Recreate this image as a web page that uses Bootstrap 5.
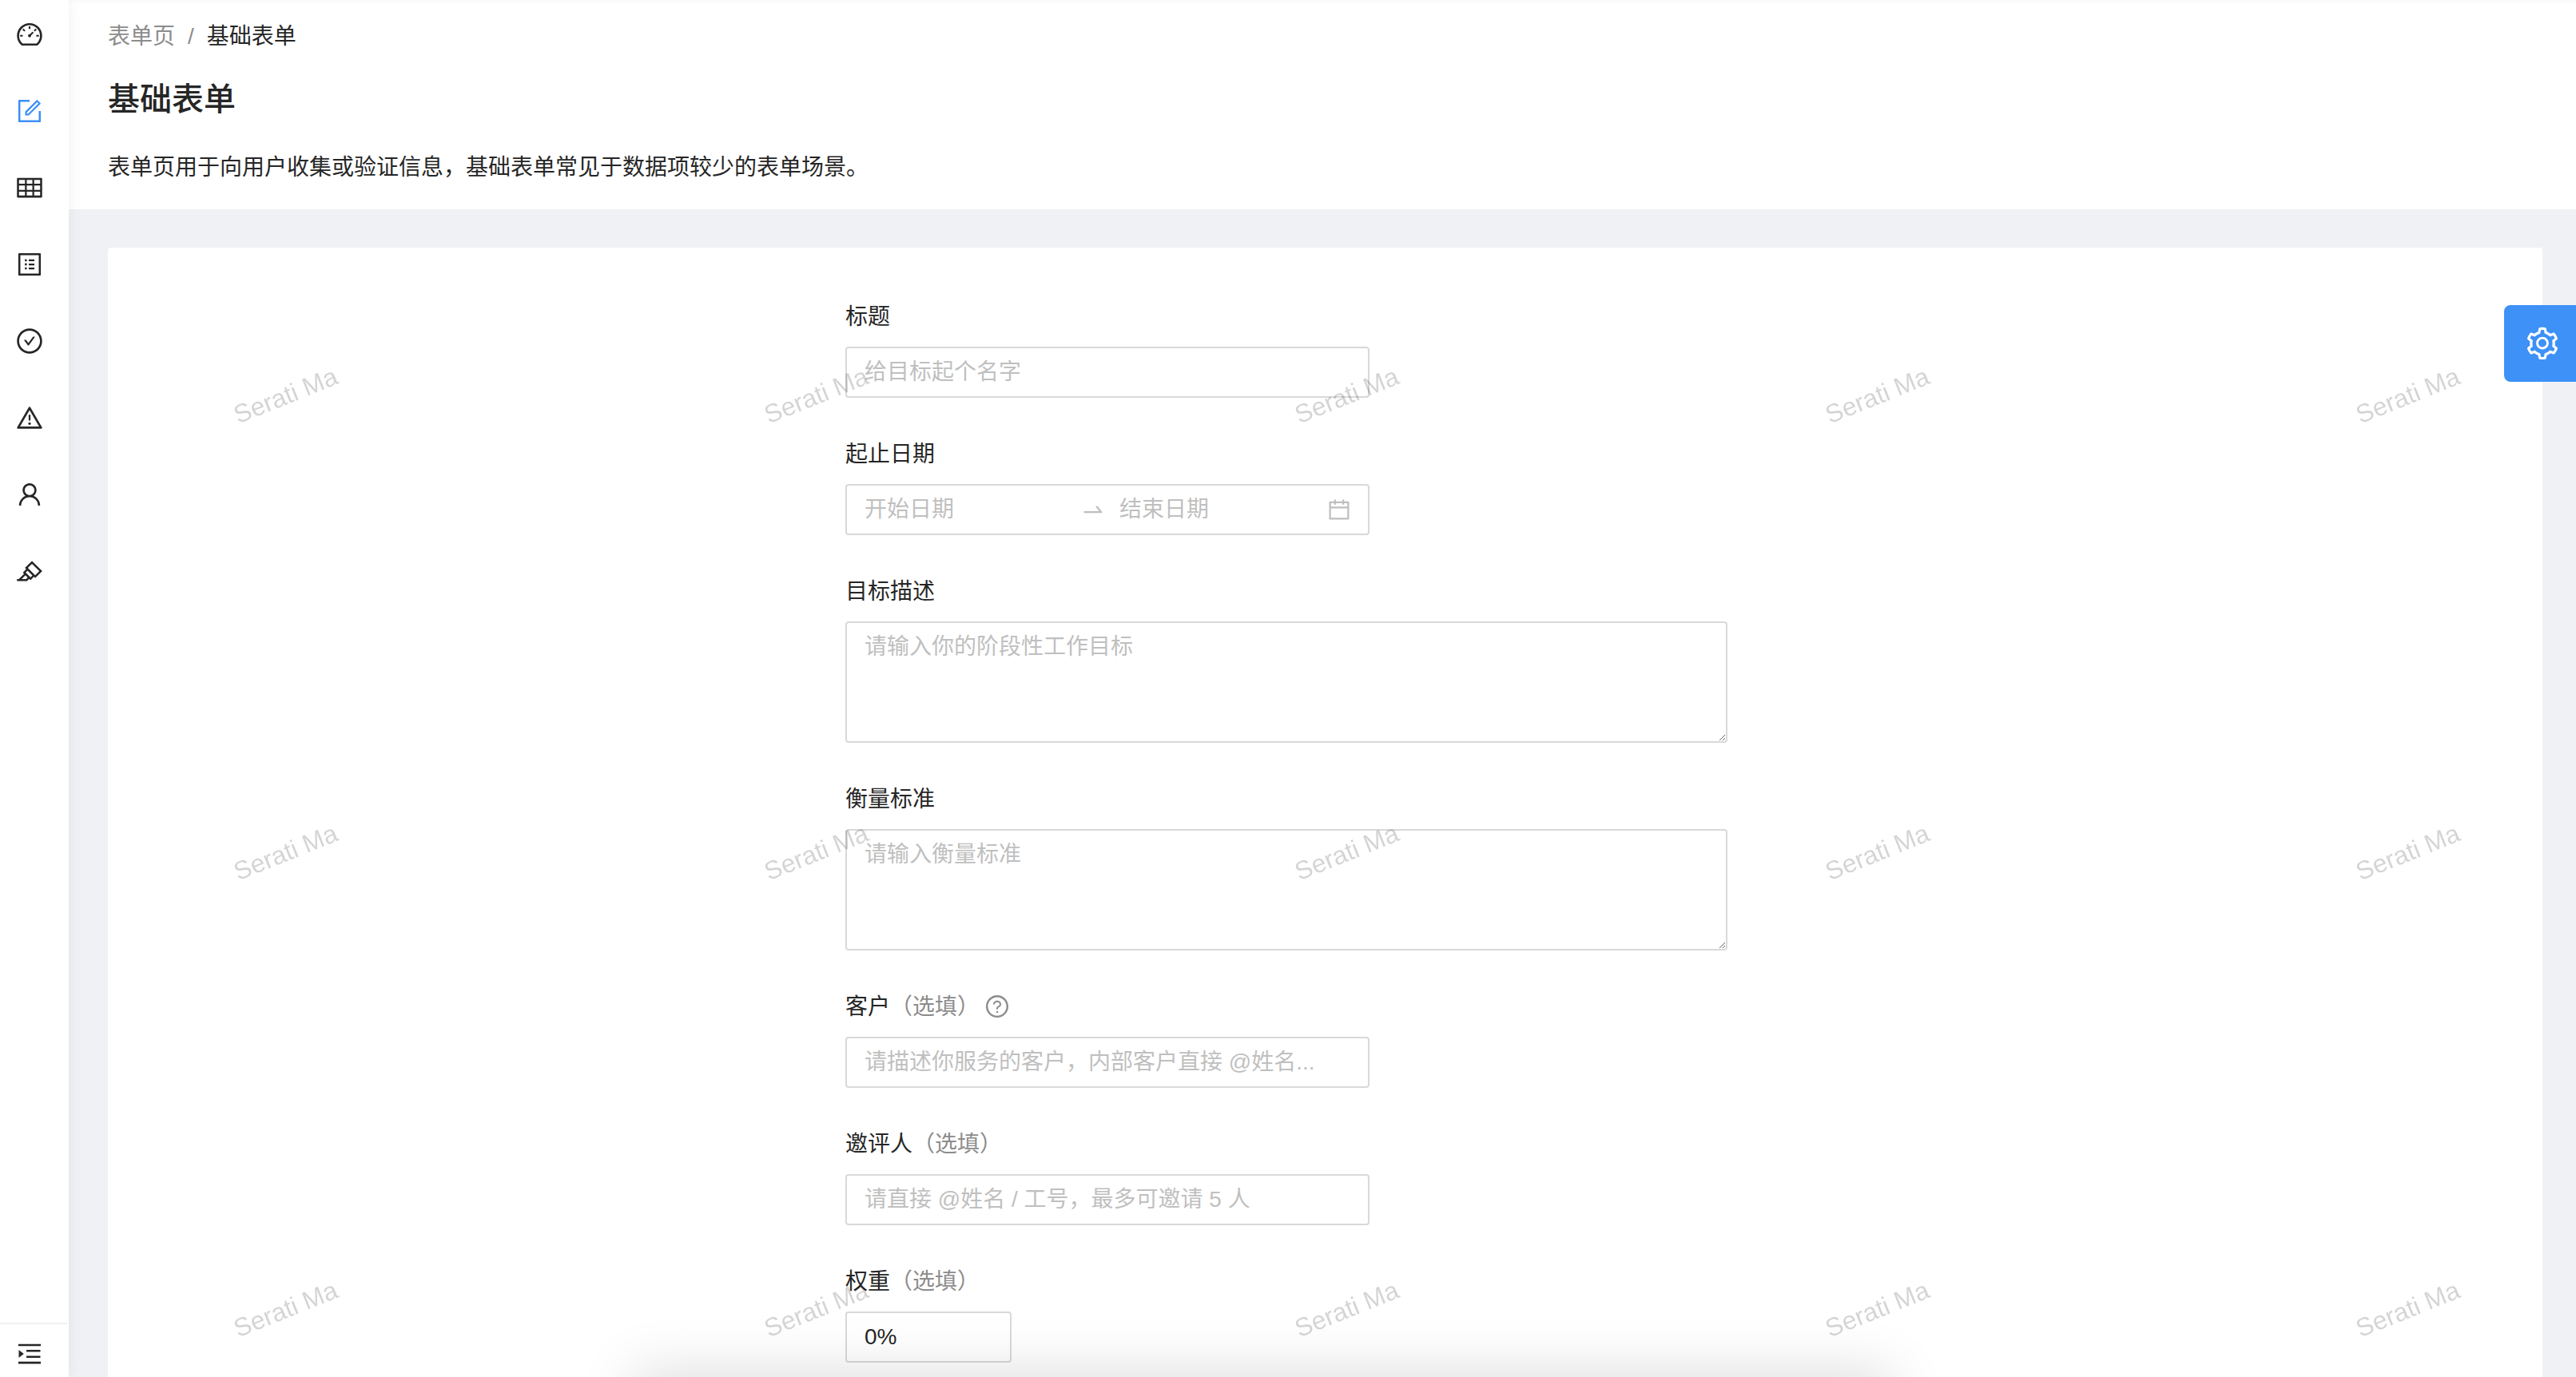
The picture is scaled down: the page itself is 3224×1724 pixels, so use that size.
<!DOCTYPE html>
<html lang="zh-CN">
<head>
<meta charset="utf-8">
<title>基础表单</title>
<link href="https://cdn.jsdelivr.net/npm/bootstrap@5.3.0/dist/css/bootstrap.min.css" rel="stylesheet">
<style>
html,body{height:100%;overflow:hidden}
body{font-family:"Liberation Sans","Noto Sans CJK SC",sans-serif;font-size:28px;line-height:44px;color:#262626;background:#f0f1f5}
.app-shell{height:100vh}
.app-side{width:86px;flex:none;background:#fff;box-shadow:2px 0 16px rgba(0,0,0,.05);z-index:2}
.side-list{padding:15px 12px 0 0;gap:40px}
.side-ico{width:56px;height:56px;color:#262626}
.side-ico svg{width:36px;height:36px;fill:currentColor}
.side-ico.is-active{color:#3d90f5}
.side-foot{margin-right:2px;padding:8px 10px 0 0;border-top:2px solid #f0f0f0;height:68px}
.page-head{padding:24px 48px 0 49px;height:262px;box-shadow:inset 0 5px 4px -3px rgba(0,0,0,.03)}
.page-head .breadcrumb{--bs-breadcrumb-item-padding-x:16px;--bs-breadcrumb-divider-color:#8c8c8c;--bs-breadcrumb-item-active-color:#262626;--bs-breadcrumb-margin-bottom:0;font-size:28px;line-height:44px}
.crumb-link{color:#8c8c8c}
.page-title{font-size:40px;line-height:56px;font-weight:500;margin:28px 0 36px}
.page-desc{margin:0}
.page-body{padding:48px 42px 0 49px}
.form-sheet{border:0;border-radius:4px;padding:64px 0 0 923px}
.f-item{margin-bottom:48px}
.f-item .form-label{display:block;margin-bottom:15px;padding-top:1px;line-height:44px;font-size:28px;color:#262626}
.f-opt{color:#8c8c8c}
.f-q{width:32px;height:32px;fill:#8c8c8c;margin-left:6px;vertical-align:-6px}
.f-item .form-control{border:2px solid #d9d9d9;border-radius:4px;font-size:28px;line-height:44px;padding:8px 22px;color:#262626;background-color:transparent;height:64px;box-shadow:none}
.f-item .form-control::placeholder{color:#bfbfbf;opacity:1}
.f-item textarea.form-control{height:152px;width:1104px;min-height:0}
.w-m{width:656px}
.w-s{width:208px}
.date-box{gap:0;padding:8px 22px!important}
.date-in{border:0;outline:0;padding:0;font-size:28px;line-height:44px;width:252px;flex:none;background:transparent}
.date-in::placeholder{color:#bfbfbf;opacity:1}
.date-arrow{width:32px;height:32px;fill:#bfbfbf;margin:0 17px 0 18px;flex:none}
.date-cal{width:32px;height:32px;fill:#bfbfbf;margin-left:auto;margin-right:-2px;flex:none}
.gear-tab{position:fixed;right:0;top:382px;width:90px;height:96px;background:#3d91f7;border-radius:8px 0 0 8px;z-index:5}
.gear-tab svg{width:46px;height:46px;fill:#fff;margin-left:6px}
.wm-layer{position:fixed;left:25px;top:209px;display:grid;grid-template-columns:repeat(5,664px);grid-auto-rows:572px;pointer-events:none;z-index:3}
.wm-cell{display:flex;align-items:center;justify-content:center;font-family:"Liberation Sans",sans-serif;font-size:32px;line-height:40px;color:rgba(0,0,0,.17)}
.wm-cell span{transform:rotate(-22deg);white-space:nowrap;display:block}
.foot-glow{position:fixed;left:800px;width:1560px;top:1724px;height:80px;box-shadow:0 0 70px 8px rgba(0,0,0,.13);z-index:4}
</style>
</head>
<body>
<div class="app-shell d-flex">
  <aside class="app-side d-flex flex-column justify-content-between">
    <div class="side-list d-flex flex-column align-items-center">
      <div class="side-ico d-flex align-items-center justify-content-center"><svg viewBox="0 0 1024 1024"><path d="M924.8 385.6a446.7 446.7 0 0 0-96-142.4 446.7 446.7 0 0 0-142.4-96C631.1 123.8 572.5 112 512 112s-119.1 11.8-174.4 35.2a446.7 446.7 0 0 0-142.4 96 446.7 446.7 0 0 0-96 142.4C75.8 440.9 64 499.5 64 560c0 132.7 58.3 257.7 159.9 343.1l1.7 1.4c5.8 4.8 13.1 7.5 20.6 7.5h531.7c7.5 0 14.8-2.7 20.6-7.5l1.7-1.4C901.7 817.7 960 692.7 960 560c0-60.5-11.9-119.1-35.2-174.4zM761.4 836H262.6A371.12 371.12 0 0 1 140 560c0-99.4 38.7-192.8 109-263 70.3-70.3 163.7-109 263-109 99.4 0 192.8 38.7 263 109 70.3 70.3 109 163.7 109 263 0 105.6-44.5 205.5-122.6 276zM623.5 421.5a8.03 8.03 0 0 0-11.3 0L527.7 506c-18.7-5-39.4-.2-54.1 14.5a55.95 55.95 0 0 0 0 79.2 55.95 55.95 0 0 0 79.2 0 55.87 55.87 0 0 0 14.5-54.1l84.5-84.5c3.1-3.1 3.1-8.2 0-11.3l-28.3-28.3zM490 320h44c4.4 0 8-3.6 8-8v-80c0-4.4-3.6-8-8-8h-44c-4.4 0-8 3.6-8 8v80c0 4.4 3.6 8 8 8zm260 218v44c0 4.4 3.6 8 8 8h80c4.4 0 8-3.6 8-8v-44c0-4.4-3.6-8-8-8h-80c-4.4 0-8 3.6-8 8zm12.7-197.2l-31.1-31.1a8.03 8.03 0 0 0-11.3 0l-56.6 56.6a8.03 8.03 0 0 0 0 11.3l31.1 31.1c3.1 3.1 8.2 3.1 11.3 0l56.6-56.6c3.1-3.1 3.1-8.2 0-11.3zm-458.6-31.1a8.03 8.03 0 0 0-11.3 0l-31.1 31.1a8.03 8.03 0 0 0 0 11.3l56.6 56.6c3.1 3.1 8.2 3.1 11.3 0l31.1-31.1c3.1-3.1 3.1-8.2 0-11.3l-56.6-56.6zM262 530h-80c-4.4 0-8 3.6-8 8v44c0 4.4 3.6 8 8 8h80c4.4 0 8-3.6 8-8v-44c0-4.4-3.6-8-8-8z"/></svg></div>
      <div class="side-ico is-active d-flex align-items-center justify-content-center"><svg viewBox="0 0 1024 1024"><path d="M904 512h-56c-4.4 0-8 3.6-8 8v320H184V184h320c4.4 0 8-3.6 8-8v-56c0-4.4-3.6-8-8-8H144c-17.7 0-32 14.3-32 32v736c0 17.7 14.3 32 32 32h736c17.7 0 32-14.3 32-32V520c0-4.4-3.6-8-8-8z"/><path d="M355.9 534.9L354 653.8c-.1 8.9 7.1 16.2 16 16.2h.4l118-2.9c2-.1 4-.9 5.4-2.3l415.9-415c3.1-3.1 3.1-8.2 0-11.3L785.4 114.3c-1.6-1.6-3.6-2.3-5.7-2.3s-4.1.8-5.7 2.3l-415.8 415a8.3 8.3 0 0 0-2.3 5.6zm63.5 23.6L779.7 199l45.2 45.1-360.5 359.7-45.7 1.1.7-46.4z"/></svg></div>
      <div class="side-ico d-flex align-items-center justify-content-center"><svg viewBox="0 0 1024 1024"><path d="M928 160H96c-17.7 0-32 14.3-32 32v640c0 17.7 14.3 32 32 32h832c17.7 0 32-14.3 32-32V192c0-17.7-14.3-32-32-32zm-40 208H676V232h212v136zm0 224H676V432h212v160zM412 432h200v160H412V432zm200-64H412V232h200v136zm-476 64h212v160H136V432zm0-200h212v136H136V232zm0 424h212v136H136V656zm276 0h200v136H412V656zm476 136H676V656h212v136z"/></svg></div>
      <div class="side-ico d-flex align-items-center justify-content-center"><svg viewBox="0 0 1024 1024"><path d="M880 112H144c-17.7 0-32 14.3-32 32v736c0 17.7 14.3 32 32 32h736c17.7 0 32-14.3 32-32V144c0-17.7-14.3-32-32-32zm-40 728H184V184h656v656zM492 400h184c4.4 0 8-3.6 8-8v-48c0-4.4-3.6-8-8-8H492c-4.4 0-8 3.6-8 8v48c0 4.4 3.6 8 8 8zm0 144h184c4.4 0 8-3.6 8-8v-48c0-4.4-3.6-8-8-8H492c-4.4 0-8 3.6-8 8v48c0 4.4 3.6 8 8 8zm0 144h184c4.4 0 8-3.6 8-8v-48c0-4.4-3.6-8-8-8H492c-4.4 0-8 3.6-8 8v48c0 4.4 3.6 8 8 8zM340 368a40 40 0 1 0 80 0 40 40 0 1 0-80 0zm0 144a40 40 0 1 0 80 0 40 40 0 1 0-80 0zm0 144a40 40 0 1 0 80 0 40 40 0 1 0-80 0z"/></svg></div>
      <div class="side-ico d-flex align-items-center justify-content-center"><svg viewBox="0 0 1024 1024"><path d="M699 353h-46.9c-10.2 0-19.9 4.9-25.9 13.3L469 584.3l-71.2-98.8c-6-8.3-15.6-13.3-25.9-13.3H325c-6.5 0-10.3 7.4-6.5 12.7l124.6 172.8a31.8 31.8 0 0 0 51.7 0l210.6-292c3.9-5.3.1-12.7-6.4-12.7z"/><path d="M512 64C264.6 64 64 264.6 64 512s200.6 448 448 448 448-200.6 448-448S759.4 64 512 64zm0 820c-205.4 0-372-166.6-372-372s166.6-372 372-372 372 166.6 372 372-166.6 372-372 372z"/></svg></div>
      <div class="side-ico d-flex align-items-center justify-content-center"><svg viewBox="0 0 1024 1024"><path d="M464 720a48 48 0 1 0 96 0 48 48 0 1 0-96 0zm16-304v184c0 4.4 3.6 8 8 8h48c4.4 0 8-3.6 8-8V416c0-4.4-3.6-8-8-8h-48c-4.4 0-8 3.6-8 8zm475.7 440l-416-720c-6.2-10.7-16.9-16-27.7-16s-21.6 5.3-27.7 16l-416 720C56 877.4 71.4 904 96 904h832c24.6 0 40-26.6 27.7-48zm-783.5-27.9L512 239.9l339.8 588.2H172.2z"/></svg></div>
      <div class="side-ico d-flex align-items-center justify-content-center"><svg viewBox="0 0 1024 1024"><path d="M858.5 763.6a374 374 0 0 0-80.6-119.5 375.63 375.63 0 0 0-119.5-80.6c-.4-.2-.8-.3-1.2-.5C719.5 518 760 444.7 760 362c0-137-111-248-248-248S264 225 264 362c0 82.7 40.5 156 102.8 201.1-.4.2-.8.3-1.2.5-44.8 18.9-85 46-119.5 80.6a375.63 375.63 0 0 0-80.6 119.5A371.7 371.7 0 0 0 136 901.8a8 8 0 0 0 8 8.2h60c4.4 0 7.9-3.5 8-7.8 2-77.2 33-149.5 87.8-204.3 56.7-56.7 132-87.9 212.2-87.9s155.5 31.2 212.2 87.9C779 752.7 810 825 812 902.2c.1 4.4 3.6 7.8 8 7.8h60a8 8 0 0 0 8-8.2c-1-47.8-10.9-94.3-29.5-138.2zM512 534c-45.9 0-89.1-17.9-121.6-50.4S340 407.9 340 362c0-45.9 17.9-89.1 50.4-121.6S466.1 190 512 190s89.1 17.9 121.6 50.4S684 316.1 684 362c0 45.9-17.9 89.1-50.4 121.6S557.9 534 512 534z"/></svg></div>
      <div class="side-ico d-flex align-items-center justify-content-center"><svg viewBox="0 0 1024 1024"><path d="M957.6 507.4L603.2 158.2a7.9 7.9 0 0 0-11.2 0L353.3 393.4a8.03 8.03 0 0 0-.1 11.3l.1.1 40 39.4-117.2 115.3a8.03 8.03 0 0 0-.1 11.3l.1.1 39.5 38.9-189.1 187H72.1c-4.4 0-8.1 3.6-8.1 8V860c0 4.4 3.6 8 8 8h344.9c2.1 0 4.1-.8 5.6-2.3l76.1-75.6 40.4 39.8a7.9 7.9 0 0 0 11.2 0l117.1-115.6 40.1 39.5a7.9 7.9 0 0 0 11.2 0l238.7-235.2c3.4-3 3.4-8 .3-11.2zM389.8 796.2H229.6l134.4-133 80.1 78.9-54.3 54.1zm154.8-62.1L373.2 565.2l68.6-67.6 171.4 168.9-68.6 67.6zM713.1 658L450.3 399.1 597.6 254l262.8 259-147.3 145z"/></svg></div>
    </div>
    <div class="side-foot d-flex align-items-center justify-content-center">
      <div class="side-ico d-flex align-items-center justify-content-center"><svg viewBox="0 0 1024 1024"><path d="M408 442h480c4.4 0 8-3.6 8-8v-56c0-4.4-3.6-8-8-8H408c-4.4 0-8 3.6-8 8v56c0 4.4 3.6 8 8 8zm-8 204c0 4.4 3.6 8 8 8h480c4.4 0 8-3.6 8-8v-56c0-4.4-3.6-8-8-8H408c-4.4 0-8 3.6-8 8v56zm504-486H120c-4.4 0-8 3.6-8 8v56c0 4.4 3.6 8 8 8h784c4.4 0 8-3.6 8-8v-56c0-4.4-3.6-8-8-8zm0 632H120c-4.4 0-8 3.6-8 8v56c0 4.4 3.6 8 8 8h784c4.4 0 8-3.6 8-8v-56c0-4.4-3.6-8-8-8zM142.4 642.1L298.7 519a8.84 8.84 0 0 0 0-13.9L142.4 381.9c-5.8-4.6-14.4-.5-14.4 6.9v246.3a8.9 8.9 0 0 0 14.4 7z"/></svg></div>
    </div>
  </aside>
  <main class="flex-grow-1 overflow-hidden">
    <header class="page-head bg-white">
      <nav aria-label="breadcrumb">
        <ol class="breadcrumb">
          <li class="breadcrumb-item crumb-link">表单页</li>
          <li class="breadcrumb-item active" aria-current="page">基础表单</li>
        </ol>
      </nav>
      <h1 class="page-title">基础表单</h1>
      <p class="page-desc">表单页用于向用户收集或验证信息，基础表单常见于数据项较少的表单场景。</p>
    </header>
    <section class="page-body">
      <div class="card form-sheet">
        <form>
          <div class="f-item">
            <label class="form-label">标题</label>
            <input class="form-control w-m" type="text" placeholder="给目标起个名字">
          </div>
          <div class="f-item">
            <label class="form-label">起止日期</label>
            <div class="form-control w-m date-box d-flex align-items-center">
              <input class="date-in" type="text" placeholder="开始日期" aria-label="开始日期">
              <svg class="date-arrow" viewBox="0 0 1024 1024"><path d="M873.1 596.2l-164-208A32 32 0 0 0 684 376h-64.8c-6.7 0-10.4 7.7-6.3 13l144.3 183H152c-4.4 0-8 3.6-8 8v60c0 4.4 3.6 8 8 8h695.9c26.8 0 41.7-30.8 25.2-51.8z"/></svg>
              <input class="date-in date-end" type="text" placeholder="结束日期" aria-label="结束日期">
              <svg class="date-cal" viewBox="0 0 1024 1024"><path d="M880 184H712v-64c0-4.4-3.6-8-8-8h-56c-4.4 0-8 3.6-8 8v64H384v-64c0-4.4-3.6-8-8-8h-56c-4.4 0-8 3.6-8 8v64H144c-17.7 0-32 14.3-32 32v664c0 17.7 14.3 32 32 32h736c17.7 0 32-14.3 32-32V216c0-17.7-14.3-32-32-32zm-40 656H184V460h656v380zM184 392V256h128v48c0 4.4 3.6 8 8 8h56c4.4 0 8-3.6 8-8v-48h256v48c0 4.4 3.6 8 8 8h56c4.4 0 8-3.6 8-8v-48h128v136H184z"/></svg>
            </div>
          </div>
          <div class="f-item">
            <label class="form-label">目标描述</label>
            <textarea class="form-control" placeholder="请输入你的阶段性工作目标"></textarea>
          </div>
          <div class="f-item">
            <label class="form-label">衡量标准</label>
            <textarea class="form-control" placeholder="请输入衡量标准"></textarea>
          </div>
          <div class="f-item">
            <label class="form-label">客户<span class="f-opt">（选填）</span><svg class="f-q" viewBox="0 0 1024 1024"><path d="M512 64C264.6 64 64 264.6 64 512s200.6 448 448 448 448-200.6 448-448S759.4 64 512 64zm0 820c-205.4 0-372-166.6-372-372s166.6-372 372-372 372 166.6 372 372-166.6 372-372 372z"/><path d="M623.6 316.7C593.6 290.4 554 276 512 276s-81.6 14.5-111.6 40.7C369.2 344 352 380.7 352 420v7.6c0 4.4 3.6 8 8 8h48c4.4 0 8-3.6 8-8V420c0-44.1 43.1-80 96-80s96 35.9 96 80c0 31.1-22 59.6-56.1 72.7-21.2 8.1-39.2 22.3-52.1 40.9-13.1 19-19.9 41.8-19.9 64.9V620c0 4.4 3.6 8 8 8h48c4.4 0 8-3.6 8-8v-22.7a48.3 48.3 0 0 1 30.9-44.8c59-22.7 97.1-74.7 97.1-132.5.1-39.3-17.1-76-48.3-103.3zM472 732a40 40 0 1 0 80 0 40 40 0 1 0-80 0z"/></svg></label>
            <input class="form-control w-m" type="text" placeholder="请描述你服务的客户，内部客户直接 @姓名...">
          </div>
          <div class="f-item">
            <label class="form-label">邀评人<span class="f-opt">（选填）</span></label>
            <input class="form-control w-m" type="text" placeholder="请直接 @姓名 / 工号，最多可邀请 5 人">
          </div>
          <div class="f-item">
            <label class="form-label">权重<span class="f-opt">（选填）</span></label>
            <input class="form-control w-s" type="text" value="0%">
          </div>
        </form>
      </div>
    </section>
  </main>
</div>
<div class="gear-tab d-flex align-items-center justify-content-center"><svg viewBox="0 0 1024 1024"><path d="M924.8 625.7l-65.5-56c3.1-19 4.7-38.4 4.7-57.8s-1.6-38.8-4.7-57.8l65.5-56a32.03 32.03 0 0 0 9.3-35.2l-.9-2.6a443.74 443.74 0 0 0-79.7-137.9l-1.8-2.1a32.12 32.12 0 0 0-35.1-9.5l-81.3 28.9c-30-24.6-63.5-44-99.7-57.6l-15.7-85a32.05 32.05 0 0 0-25.8-25.7l-2.7-.5c-52.1-9.4-106.9-9.4-159 0l-2.7.5a32.05 32.05 0 0 0-25.8 25.7l-15.8 85.4a351.86 351.86 0 0 0-99 57.4l-81.9-29.1a32 32 0 0 0-35.1 9.5l-1.8 2.1a446.02 446.02 0 0 0-79.7 137.9l-.9 2.6c-4.5 12.5-.8 26.5 9.3 35.2l66.3 56.6c-3.1 18.8-4.6 38-4.6 57.1 0 19.2 1.5 38.4 4.6 57.1L99 625.5a32.03 32.03 0 0 0-9.3 35.2l.9 2.6c18.1 50.4 44.9 96.9 79.7 137.9l1.8 2.1a32.12 32.12 0 0 0 35.1 9.5l81.9-29.1c29.8 24.5 63.1 43.9 99 57.4l15.8 85.4a32.05 32.05 0 0 0 25.8 25.7l2.7.5a449.4 449.4 0 0 0 159 0l2.7-.5a32.05 32.05 0 0 0 25.8-25.7l15.7-85a350 350 0 0 0 99.7-57.6l81.3 28.9a32 32 0 0 0 35.1-9.5l1.8-2.1c34.8-41.1 61.6-87.5 79.7-137.9l.9-2.6c4.5-12.3.8-26.3-9.3-35zM788.3 465.9c2.5 15.1 3.8 30.6 3.8 46.1s-1.3 31-3.8 46.1l-6.6 40.1 74.7 63.9a370.03 370.03 0 0 1-42.6 73.6L721 702.8l-31.4 25.8c-23.9 19.6-50.5 35-79.3 45.8l-38.1 14.3-17.9 97a377.5 377.5 0 0 1-85 0l-17.9-97.2-37.8-14.5c-28.5-10.8-55-26.2-78.7-45.7l-31.4-25.9-93.4 33.2c-17-22.9-31.2-47.6-42.6-73.6l75.5-64.5-6.5-40c-2.4-14.9-3.7-30.3-3.7-45.5 0-15.3 1.2-30.6 3.7-45.5l6.5-40-75.5-64.5c11.3-26.1 25.6-50.7 42.6-73.6l93.4 33.2 31.4-25.9c23.7-19.5 50.2-34.9 78.7-45.7l37.9-14.3 17.9-97.2c28.1-3.2 56.8-3.2 85 0l17.9 97 38.1 14.3c28.7 10.8 55.4 26.2 79.3 45.8l31.4 25.8 92.8-32.9c17 22.9 31.2 47.6 42.6 73.6L781.8 426l6.5 39.9zM512 326c-97.2 0-176 78.8-176 176s78.8 176 176 176 176-78.8 176-176-78.8-176-176-176zm79.2 255.2A111.6 111.6 0 0 1 512 614c-29.9 0-58-11.7-79.2-32.8A111.6 111.6 0 0 1 400 502c0-29.9 11.7-58 32.8-79.2C454 401.6 482.1 390 512 390c29.9 0 58 11.6 79.2 32.8A111.6 111.6 0 0 1 624 502c0 29.9-11.7 58-32.8 79.2z"/></svg></div>
<div class="wm-layer" aria-hidden="true">
  <div class="wm-cell"><span>Serati Ma</span></div><div class="wm-cell"><span>Serati Ma</span></div><div class="wm-cell"><span>Serati Ma</span></div><div class="wm-cell"><span>Serati Ma</span></div><div class="wm-cell"><span>Serati Ma</span></div>
  <div class="wm-cell"><span>Serati Ma</span></div><div class="wm-cell"><span>Serati Ma</span></div><div class="wm-cell"><span>Serati Ma</span></div><div class="wm-cell"><span>Serati Ma</span></div><div class="wm-cell"><span>Serati Ma</span></div>
  <div class="wm-cell"><span>Serati Ma</span></div><div class="wm-cell"><span>Serati Ma</span></div><div class="wm-cell"><span>Serati Ma</span></div><div class="wm-cell"><span>Serati Ma</span></div><div class="wm-cell"><span>Serati Ma</span></div>
</div>
<div class="foot-glow"></div>
<script src="https://cdn.jsdelivr.net/npm/bootstrap@5.3.0/dist/js/bootstrap.bundle.min.js"></script>
</body>
</html>
